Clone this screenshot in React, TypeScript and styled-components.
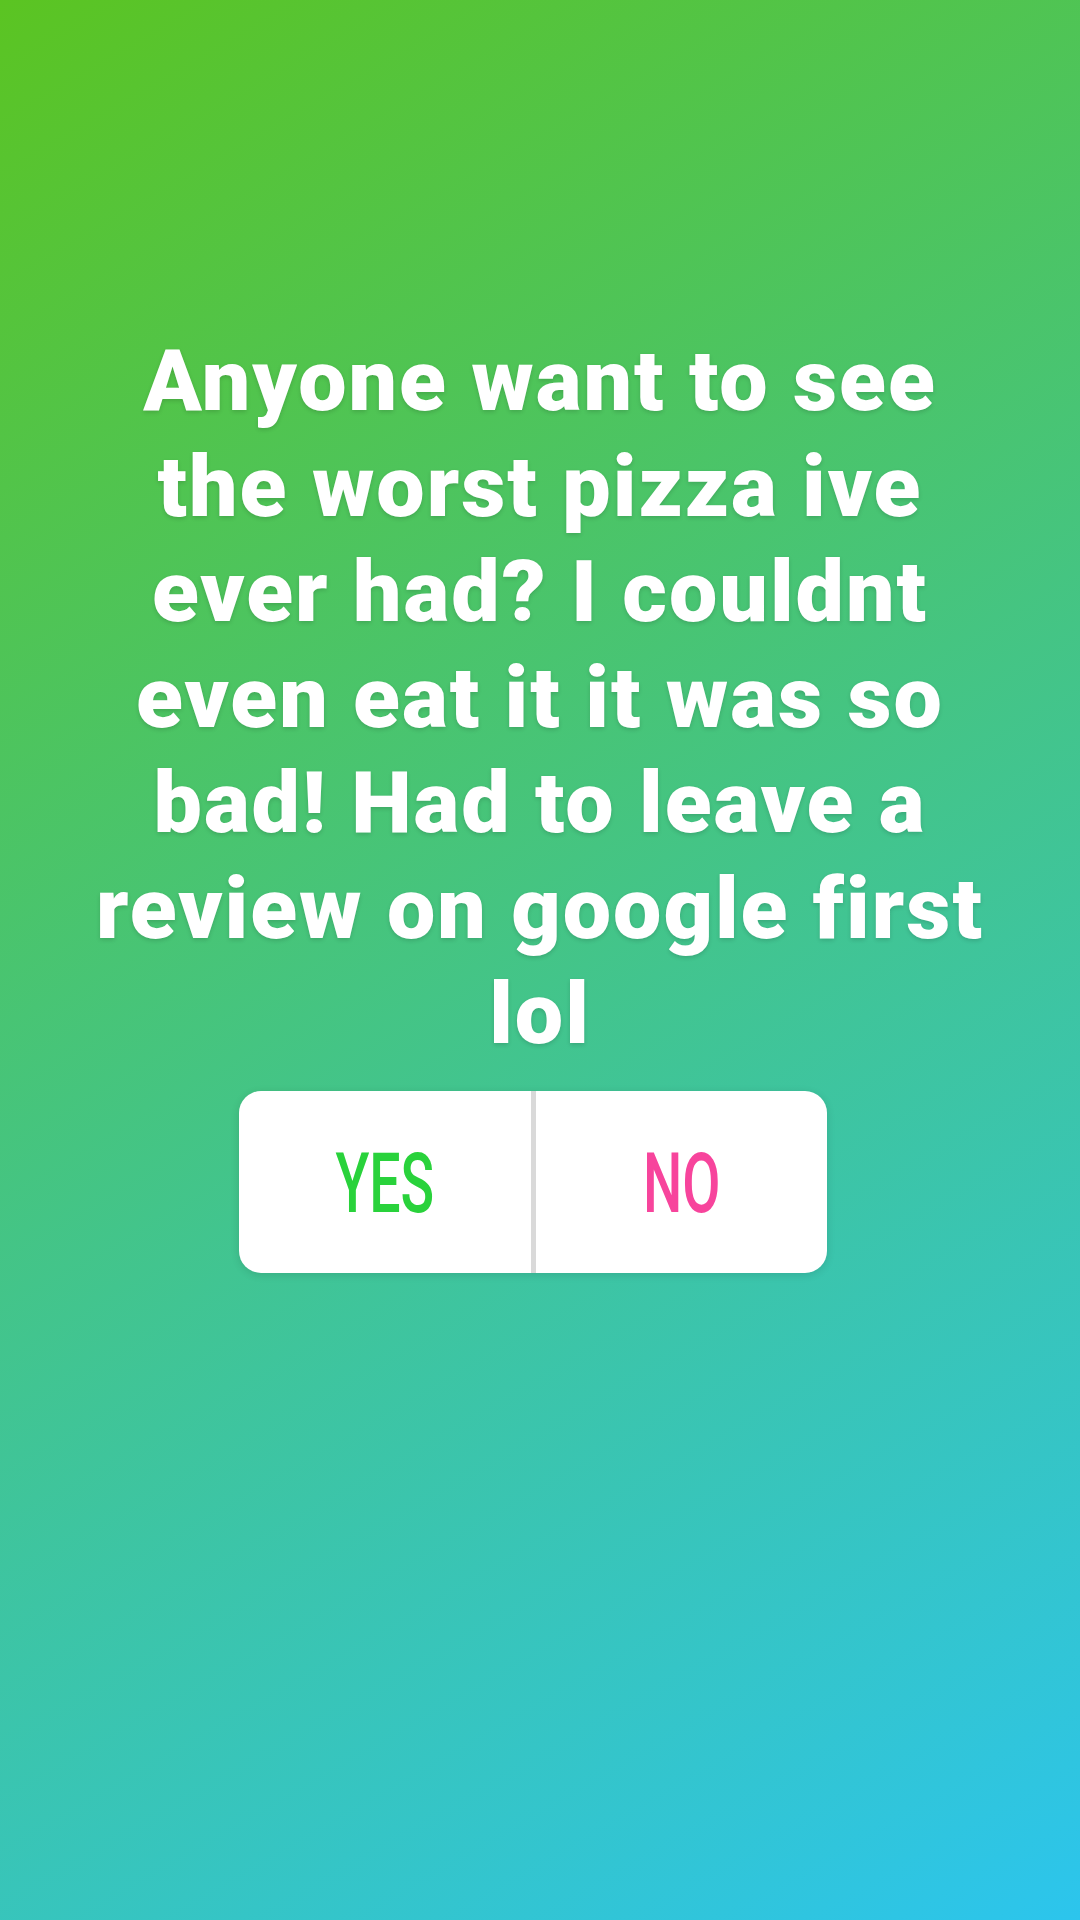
import React from "react";
import styled, { createGlobalStyle } from "styled-components";

const GlobalStyle = createGlobalStyle`
  html, body {
    margin: 0;
    padding: 0;
  }
  body {
    font-family: Roboto, "Liberation Sans", sans-serif;
  }
`;

const Stage = styled.main`
  width: 1080px;
  height: 1920px;
  box-sizing: border-box;
  padding-top: 328px;
  display: flex;
  flex-direction: column;
  align-items: center;
  background: linear-gradient(150deg, #5bc422 0%, #2cc5ed 100%);
  overflow: hidden;
`;

const Caption = styled.h1`
  margin: 0;
  width: 1040px;
  text-align: center;
  font-family: Roboto, "Liberation Sans", sans-serif;
  font-weight: 900;
  font-size: 86px;
  line-height: 105.5px;
  letter-spacing: 2px;
  color: #ffffff;
  text-shadow: 0 2px 4px rgba(0, 0, 0, 0.14);
`;

const Line = styled.span`
  display: block;
  white-space: nowrap;
`;

const Poll = styled.div`
  margin-top: 24px;
  margin-right: 14px;
  width: 588px;
  height: 182px;
  display: grid;
  grid-template-columns: 1fr 5px 1fr;
  background: #ffffff;
  border-radius: 22px;
  overflow: hidden;
  box-shadow: 0 2px 8px rgba(0, 0, 0, 0.12);
`;

const Divider = styled.div`
  background: #d9d9d9;
`;

const Option = styled.div<{ $color: string }>`
  display: flex;
  align-items: center;
  justify-content: center;
  color: ${(p) => p.$color};
  font-family: Roboto, "Liberation Sans", sans-serif;
  font-weight: 500;
  font-size: 84px;
  line-height: 1;
`;

const OptionLabel = styled.span`
  display: inline-block;
  transform: scaleX(0.66);
  padding-top: 4px;
`;

const lines = [
  "Anyone want to see",
  "the worst pizza ive",
  "ever had? I couldnt",
  "even eat it it was so",
  "bad! Had to leave a",
  "review on google first",
  "lol",
];

export default function App() {
  return (
    <>
      <GlobalStyle />
      <Stage>
        <Caption>
          {lines.map((l) => (
            <Line key={l}>{l}</Line>
          ))}
        </Caption>
        <Poll>
          <Option $color="#29d23b">
            <OptionLabel>YES</OptionLabel>
          </Option>
          <Divider />
          <Option $color="#f7449c">
            <OptionLabel>NO</OptionLabel>
          </Option>
        </Poll>
      </Stage>
    </>
  );
}
